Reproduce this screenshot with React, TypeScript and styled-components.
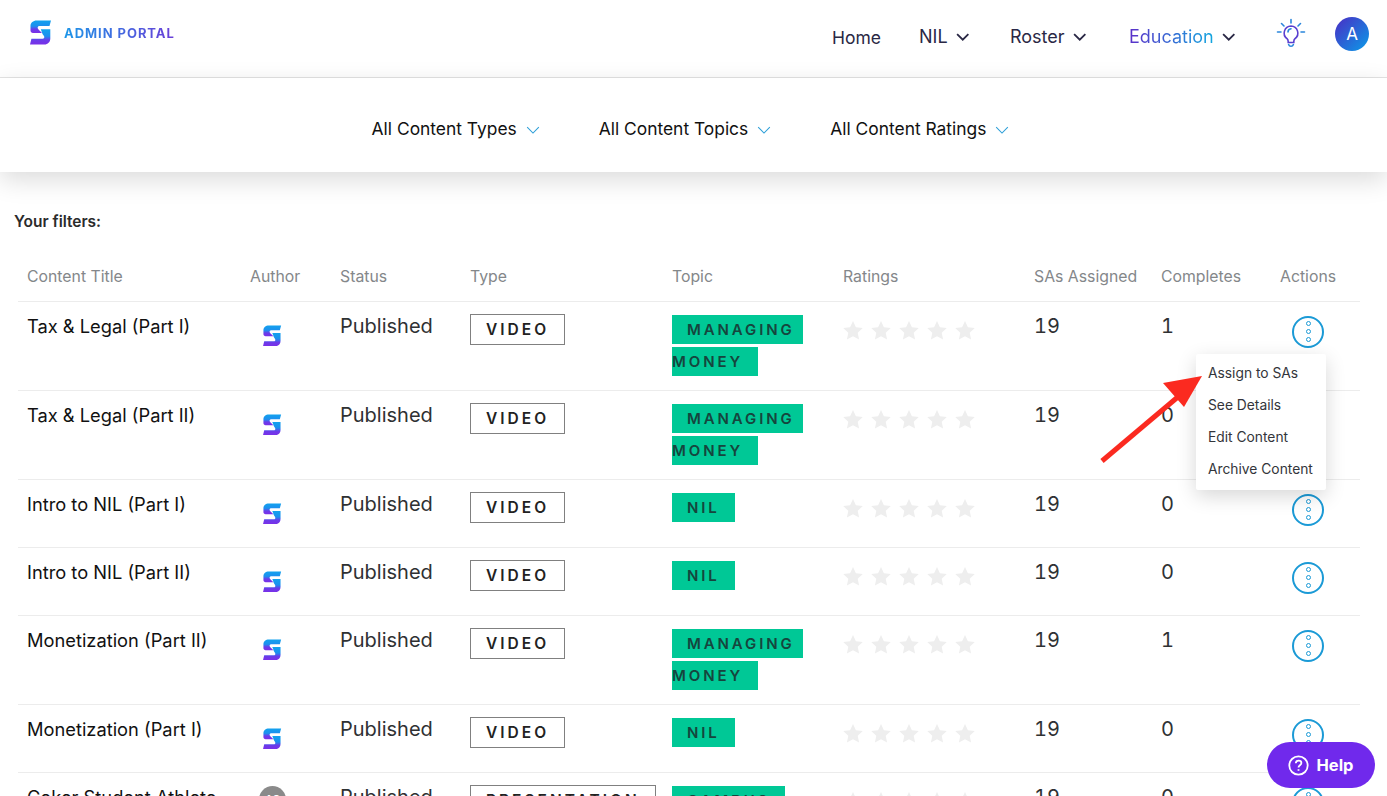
import React from "react";
import styled, { createGlobalStyle } from "styled-components";

const Global = createGlobalStyle`
  html, body { margin: 0; padding: 0; height: 100%; overflow: hidden; background: #fff; }
  body { font-family: Inter, "Noto Sans", sans-serif; color: #212529; }
  * { box-sizing: border-box; }
`;

const Page = styled.div`
  position: relative;
  width: 1387px;
  height: 796px;
  overflow: hidden;
  background: #fff;
`;

const Header = styled.header`
  display: flex;
  justify-content: space-between;
  height: 78px;
  padding: 0 18px 0 30px;
  border-bottom: 1px solid #e4e4e4;
`;

const Brand = styled.div`
  display: flex;
  align-items: center;
  gap: 12px;
  height: 66px;
`;

const BrandText = styled.span`
  font-size: 13px;
  font-weight: 700;
  letter-spacing: 0.95px;
  background: linear-gradient(90deg, #1c96e8, #6a3ed8);
  -webkit-background-clip: text;
  background-clip: text;
  color: transparent;
`;

const Nav = styled.nav`
  display: flex;
  align-items: center;
  height: 73px;
`;

const NavItem = styled.a<{ $w: number; $home?: boolean }>`
  display: flex;
  align-items: center;
  gap: 8px;
  width: ${(p) => p.$w}px;
  font-size: ${(p) => (p.$home ? 17.5 : 18)}px;
  color: #2a2845;
  padding-top: ${(p) => (p.$home ? 2 : 0)}px;
`;

const GradientLabel = styled.span`
  background: linear-gradient(90deg, #5b2fc9, #12a8e0);
  -webkit-background-clip: text;
  background-clip: text;
  color: transparent;
`;

const Bulb = styled.svg`
  width: 30px;
  height: 30px;
  margin: 0 29px 7px 0;
`;

const Avatar = styled.div`
  width: 34px;
  height: 34px;
  margin-bottom: 5px;
  border-radius: 50%;
  background: linear-gradient(135deg, #4a2cc4, #0a9ce8);
  color: #fff;
  font-size: 17px;
  display: flex;
  align-items: center;
  justify-content: center;
`;

const FilterBar = styled.div`
  display: flex;
  justify-content: center;
  gap: 59px;
  align-items: center;
  height: 94px;
  padding: 6px 6px 0 0;
  box-shadow: 0 8px 24px rgba(0, 0, 0, 0.14);
  position: relative;
`;

const FilterItem = styled.div`
  display: flex;
  align-items: center;
  gap: 9px;
  font-size: 17.4px;
  color: #111;
`;

const FilterChevron = styled.span`
  display: flex;
  margin-top: 4px;
`;

const Content = styled.main`
  padding: 41px 27px 0 18px;
`;

const FiltersLabel = styled.div`
  font-size: 15.5px;
  font-weight: 600;
  color: #2b2b2b;
  line-height: 18px;
  margin-left: -4px;
  margin-bottom: 21px;
`;

const Table = styled.table`
  width: 1342px;
  table-layout: fixed;
  border-collapse: collapse;
`;

const Th = styled.th<{ $w: number }>`
  width: ${(p) => p.$w}px;
  height: 49px;
  padding: 0 9px;
  text-align: left;
  font-size: 15.8px;
  font-weight: 400;
  color: #84878a;
  white-space: nowrap;
`;

const Tr = styled.tr`
  border-top: 1px solid #ececec;
`;

const Td = styled.td`
  height: 68px;
  padding: 13px 9px 11px;
  vertical-align: top;
  font-size: 20px;
  line-height: 22px;
  color: #2f3133;
  white-space: nowrap;
`;

const Title = styled(Td)`
  font-size: 18.3px;
  color: #111;
`;

const NumberCell = styled(Td)`
  font-size: 20px;
  font-variant-numeric: tabular-nums;
`;

const AuthorCell = styled.div`
  padding: 10px 0 0 13px;
  height: 24px;
`;

const Initials = styled.div`
  width: 27px;
  height: 27px;
  margin: -10px 0 0 -4px;
  border-radius: 50%;
  background: #8a8a8a;
  color: #fff;
  font-size: 11px;
  font-weight: 600;
  display: flex;
  align-items: center;
  justify-content: center;
`;

const TypeTag = styled.span`
  display: block;
  width: fit-content;
  height: 31px;
  margin-top: -1px;
  padding: 0 15px;
  border: 1px solid #808080;
  font-size: 15.5px;
  line-height: 29px;
  font-weight: 600;
  letter-spacing: 3px;
  color: #222;
`;

const TopicWord = styled.span<{ $first: boolean; $last: boolean }>`
  display: block;
  width: fit-content;
  height: 29px;
  margin-bottom: 3px;
  padding: 0 ${(p) => (p.$last ? 15 : 8)}px 0 ${(p) => (p.$first ? 15 : 0)}px;
  background: #00c896;
  font-size: 15px;
  line-height: 29px;
  font-weight: 600;
  letter-spacing: 2.9px;
  color: #16453d;
`;

const Stars = styled.div`
  display: flex;
  gap: 8px;
  margin-top: 6px;
`;

const ActionButton = styled.button`
  width: 32px;
  height: 32px;
  margin: 1px 0 0 12px;
  padding: 0;
  border: 2px solid #1b9ad6;
  border-radius: 50%;
  background: #fff;
  display: flex;
  flex-direction: column;
  align-items: center;
  justify-content: center;
  gap: 2.7px;
`;

const Dot = styled.span`
  width: 5px;
  height: 5px;
  border: 1.6px solid #1b9ad6;
  border-radius: 50%;
`;

const Menu = styled.div`
  position: absolute;
  left: 1196px;
  top: 354px;
  width: 130px;
  height: 136px;
  padding: 3px 12px;
  background: #fff;
  border-radius: 2px;
  box-shadow: 0 6px 20px rgba(0, 0, 0, 0.16);
`;

const MenuItem = styled.div`
  height: 32px;
  line-height: 32px;
  font-size: 13.8px;
  color: #33353a;
  white-space: nowrap;
`;

const Arrow = styled.svg`
  position: absolute;
  left: 1095px;
  top: 370px;
  width: 115px;
  height: 100px;
`;

const HelpButton = styled.button`
  position: absolute;
  left: 1267px;
  top: 742px;
  width: 108px;
  height: 46px;
  border: 0;
  border-radius: 23px;
  background: #7029ec;
  color: #fff;
  font: 700 16.5px Inter, sans-serif;
  display: flex;
  align-items: center;
  justify-content: center;
  gap: 7px;
`;

const Logo = ({ size, id }: { size: number; id: string }) => (
  <svg width={size} height={size * 1.14} viewBox="0 0 22 25" aria-hidden="true">
    <defs>
      <linearGradient id={id} x1="0" y1="0" x2="0" y2="1">
        <stop offset="0" stopColor="#12a2ee" />
        <stop offset="0.45" stopColor="#1d8fee" />
        <stop offset="0.7" stopColor="#6a3cea" />
        <stop offset="1" stopColor="#7a2fe8" />
      </linearGradient>
    </defs>
    <path
      fill={`url(#${id})`}
      d="M6.5 0.5H21L19.5 6H9.5C7.5 6 7 8 8.5 9.5L12 13H3C1.5 13 .5 12 .5 10.5V6C.5 2.8 3.3 .5 6.5 .5Z"
    />
    <path
      fill={`url(#${id})`}
      d="M10.8 9.3H20.3V18.5C20.3 22 17.8 24.5 14.5 24.5H0L1.4 18.8H12.5C14.3 18.8 14.8 17.2 13.8 15.8L12.5 14Z"
    />
  </svg>
);

const Chevron = ({ color = "#2a2845", size = 13.5, width = 1.6 }: { color?: string; size?: number; width?: number }) => (
  <svg width={size} height={size} viewBox="0 0 12 12" fill="none" aria-hidden="true">
    <path d="M1 3.6 6 8.6l5-5" stroke={color} strokeWidth={width} />
  </svg>
);

const Star = () => (
  <svg width="20" height="19" viewBox="0 0 20 19" aria-hidden="true">
    <path
      fill="#eeeeee"
      d="M10 0l2.9 6.3 6.9.8-5.1 4.7 1.4 6.8L10 15.2l-6.1 3.4 1.4-6.8L.2 7.1l6.9-.8z"
    />
  </svg>
);

type Row = {
  title: string;
  author?: string;
  type: string;
  topic: string;
  sas: number;
  done: number;
};

const rows: Row[] = [
  { title: "Tax & Legal (Part I)", type: "VIDEO", topic: "MANAGING MONEY", sas: 19, done: 1 },
  { title: "Tax & Legal (Part II)", type: "VIDEO", topic: "MANAGING MONEY", sas: 19, done: 0 },
  { title: "Intro to NIL (Part I)", type: "VIDEO", topic: "NIL", sas: 19, done: 0 },
  { title: "Intro to NIL (Part II)", type: "VIDEO", topic: "NIL", sas: 19, done: 0 },
  { title: "Monetization (Part II)", type: "VIDEO", topic: "MANAGING MONEY", sas: 19, done: 1 },
  { title: "Monetization (Part I)", type: "VIDEO", topic: "NIL", sas: 19, done: 0 },
  { title: "Coker Student Athlete", author: "AS", type: "PRESENTATION", topic: "CAMPUS", sas: 19, done: 0 },
];

const columns: [string, number][] = [
  ["Content Title", 223],
  ["Author", 90],
  ["Status", 130],
  ["Type", 202],
  ["Topic", 171],
  ["Ratings", 191],
  ["SAs Assigned", 127],
  ["Completes", 119],
  ["Actions", 89],
];

const filters = ["All Content Types", "All Content Topics", "All Content Ratings"];

export default function App() {
  return (
    <Page>
      <Global />
      <Header>
        <Brand>
          <Logo size={22} id="brand-logo" />
          <BrandText>ADMIN PORTAL</BrandText>
        </Brand>
        <Nav>
          <NavItem $w={87} $home>Home</NavItem>
          <NavItem $w={91}>NIL <Chevron /></NavItem>
          <NavItem $w={119}>Roster <Chevron /></NavItem>
          <NavItem $w={147}><GradientLabel>Education</GradientLabel> <Chevron /></NavItem>
          <Bulb viewBox="0 0 30 30" fill="none" stroke="#2a86dc" strokeWidth="1.6" strokeLinecap="round">
            <path d="M15 1.5v3.5M5.5 5.5l2.5 2.5M24.5 5.5 22 8M1.5 14h3.5M25 14h3.5" />
            <path d="M15 8a7 7 0 0 0-4 12.6c.9.8 1.2 1.6 1.2 2.9v1h5.6v-1c0-1.3.3-2.1 1.2-2.9A7 7 0 0 0 15 8Z" stroke="#5a3fd0" />
            <path d="M12.6 26.5c.4 1.2 1.2 1.8 2.4 1.8s2-.6 2.4-1.8M12 14c0-1.8 1.2-3 3-3.3" />
          </Bulb>
          <Avatar>A</Avatar>
        </Nav>
      </Header>

      <FilterBar>
        {filters.map((f) => (
          <FilterItem key={f}>
            {f}
            <FilterChevron><Chevron color="#2c9fd8" size={14} width={0.9} /></FilterChevron>
          </FilterItem>
        ))}
      </FilterBar>

      <Content>
        <FiltersLabel>Your filters:</FiltersLabel>
        <Table>
          <thead>
            <tr>
              {columns.map(([name, w]) => (
                <Th key={name} $w={w}>{name}</Th>
              ))}
            </tr>
          </thead>
          <tbody>
            {rows.map((r) => {
              const words = r.topic.split(" ");
              return (
                <Tr key={r.title}>
                  <Title>{r.title}</Title>
                  <Td>
                    <AuthorCell>
                      {r.author ? <Initials>{r.author}</Initials> : <Logo size={19} id={`a-${r.title.replace(/\W/g, "")}`} />}
                    </AuthorCell>
                  </Td>
                  <Td>Published</Td>
                  <Td><TypeTag>{r.type}</TypeTag></Td>
                  <Td>
                    {words.map((w, i) => (
                      <TopicWord key={w} $first={i === 0} $last={i === words.length - 1}>{w}</TopicWord>
                    ))}
                  </Td>
                  <Td>
                    <Stars>
                      {[0, 1, 2, 3, 4].map((s) => <Star key={s} />)}
                    </Stars>
                  </Td>
                  <NumberCell>{r.sas}</NumberCell>
                  <NumberCell>{r.done}</NumberCell>
                  <Td>
                    <ActionButton aria-label="Actions"><Dot /><Dot /><Dot /></ActionButton>
                  </Td>
                </Tr>
              );
            })}
          </tbody>
        </Table>
      </Content>

      <Menu>
        <MenuItem>Assign to SAs</MenuItem>
        <MenuItem>See Details</MenuItem>
        <MenuItem>Edit Content</MenuItem>
        <MenuItem>Archive Content</MenuItem>
      </Menu>

      <Arrow viewBox="0 0 115 100" aria-hidden="true">
        <path d="M7 91 84 26" stroke="#fb2a20" strokeWidth="5" />
        <path d="M107 6 89 37 68 13Z" fill="#fb2a20" />
      </Arrow>

      <HelpButton>
        <svg width="21" height="21" viewBox="0 0 21 21" fill="none" stroke="#fff" strokeWidth="1.8" aria-hidden="true">
          <circle cx="10.5" cy="10.5" r="9.2" />
          <path d="M7.8 8.2c.1-1.6 1.2-2.5 2.8-2.5s2.8.9 2.8 2.3c0 2.2-2.9 2.2-2.9 4.4" />
          <path d="M10.5 14.2v1.6" />
        </svg>
        Help
      </HelpButton>
    </Page>
  );
}
